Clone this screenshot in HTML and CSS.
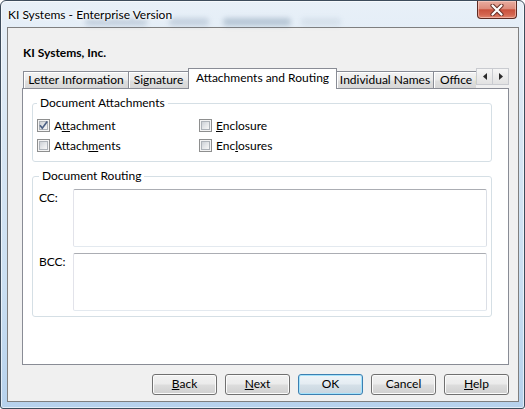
FILE: index.html
```html
<!DOCTYPE html>
<html>
<head>
<meta charset="utf-8">
<link rel="stylesheet" href="styles.css">
</head>
<body>
<div class="window">
  <div class="titlebar">
    <div class="ghost" aria-hidden="true">
      <span class="blob b1"></span><span class="blob b2"></span><span class="blob b3"></span><span class="blob b4"></span>
    </div>
    <span class="title">KI Systems - Enterprise Version</span>
    <div class="close">
      <svg width="16" height="12" viewBox="0 0 16 12"><path d="M3.5 1.5 L12.5 10.5 M12.5 1.5 L3.5 10.5" stroke="#6a3128" stroke-width="4.2" stroke-linecap="round" fill="none"/><path d="M3.5 1.5 L12.5 10.5 M12.5 1.5 L3.5 10.5" stroke="#ffffff" stroke-width="2.2" stroke-linecap="round" fill="none"/></svg>
    </div>
  </div>
  <div class="client">
    <div class="company">KI Systems, Inc.</div>
    <div class="tabrow">
      <div class="tablist">
        <div class="tab w1">Letter Information</div>
        <div class="tab w2">Signature</div>
        <div class="tab sel w3">Attachments and Routing</div>
        <div class="tab w4">Individual Names</div>
        <div class="tab w5">Office Information</div>
      </div>
      <div class="spin">
        <span class="spin-btn"><svg width="4" height="7" viewBox="0 0 4 7"><path d="M4 0 L0 3.5 L4 7 Z" fill="#2b2b2b"/></svg></span>
        <span class="spin-btn"><svg width="4" height="7" viewBox="0 0 4 7"><path d="M0 0 L4 3.5 L0 7 Z" fill="#2b2b2b"/></svg></span>
      </div>
    </div>
    <div class="panel">
      <fieldset class="group">
        <legend>Document Attachments</legend>
        <div class="checks">
          <div class="check"><span class="cb"><span class="cb-in"></span><svg class="tick" width="11" height="11" viewBox="0 0 11 11"><path d="M2 5.2 L4.3 8.2 L9.2 1.6" stroke="#4d6185" stroke-width="1.7" fill="none" stroke-linejoin="miter"/></svg></span><span>A<u>t</u>tachment</span></div>
          <div class="check"><span class="cb"><span class="cb-in"></span></span><span><u>E</u>nclosure</span></div>
          <div class="check"><span class="cb"><span class="cb-in"></span></span><span>Attach<u>m</u>ents</span></div>
          <div class="check"><span class="cb"><span class="cb-in"></span></span><span>Enc<u>l</u>osures</span></div>
        </div>
      </fieldset>
      <fieldset class="group routing">
        <legend>Document Routing</legend>
        <div class="route">
          <span class="rlabel">CC:</span><div class="textbox"></div>
          <span class="rlabel">BCC:</span><div class="textbox"></div>
        </div>
      </fieldset>
    </div>
    <div class="buttons">
      <div class="btn"><u>B</u>ack</div>
      <div class="btn"><u>N</u>ext</div>
      <div class="btn default">OK</div>
      <div class="btn">Cancel</div>
      <div class="btn"><u>H</u>elp</div>
    </div>
  </div>
</div>
</body>
</html>
```

FILE: styles.css
```css
html, body {
  margin: 0;
  padding: 0;
  background: #ffffff;
}

body {
  font-family: "Lato", "Noto Sans", "Liberation Sans", sans-serif;
  font-size: 12px;
  color: #000;
}

.window {
  width: 525px;
  height: 409px;
  box-sizing: border-box;
  border: 1px solid #3d4c5c;
  border-radius: 6px 6px 3px 3px;
  background: linear-gradient(180deg, #e8f0f8 0%, #d9e7f4 30%, #cadff2 70%, #b6d1ec 100%);
  box-shadow: inset 0 0 0 1px rgba(255, 255, 255, 0.6);
  display: flex;
  flex-direction: column;
  overflow: hidden;
}

.titlebar {
  height: 26px;
  flex: none;
  display: flex;
  align-items: flex-start;
  position: relative;
}

.ghost {
  position: absolute;
  left: 0;
  top: 0;
  width: 100%;
  height: 26px;
}

.blob {
  position: absolute;
  top: 17px;
  height: 8px;
  border-radius: 4px;
  background: rgba(80, 110, 140, 0.22);
  filter: blur(2.4px);
}

.b1 { left: 84px; width: 62px; }
.b2 { left: 168px; width: 40px; }
.b3 { left: 222px; width: 68px; background: rgba(80, 110, 140, 0.3); }
.b4 { left: 300px; width: 40px; background: rgba(80, 110, 140, 0.1); }

.title {
  position: relative;
  flex: 1;
  padding: 6px 0 0 7px;
  line-height: 15px;
  font-size: 12px;
  color: #000;
  text-shadow: 0 0 5px #fff, 0 0 3px #fff;
}

.close {
  position: relative;
  width: 40px;
  height: 18px;
  box-sizing: border-box;
  margin-right: 7px;
  border: 1px solid #5c2a22;
  border-top: none;
  border-radius: 0 0 4px 4px;
  background: linear-gradient(180deg, #e9ada0 0%, #dd8c7c 45%, #c9513c 52%, #d4654f 80%, #e0866f 100%);
  box-shadow: inset 0 0 0 1px rgba(255, 220, 210, 0.5);
  display: flex;
  align-items: center;
  justify-content: center;
}

.client {
  flex: 1;
  margin: 0 5px 6px 6px;
  border: 1px solid #7f7f7f;
  background: #f0f0f0;
  padding: 0 9px 0 14px;
  display: flex;
  flex-direction: column;
}

.company {
  height: 40px;
  box-sizing: border-box;
  padding: 17px 0 0 1px;
  font-weight: bold;
  line-height: 15px;
  flex: none;
}

.tabrow {
  display: flex;
  height: 21px;
  flex: none;
}

.tablist {
  display: flex;
  align-items: flex-end;
  width: 454px;
  height: 21px;
  overflow: hidden;
  flex: none;
  padding-left: 1px;
  box-sizing: border-box;
}

.tab {
  flex: none;
  height: 18px;
  box-sizing: border-box;
  border: 1px solid #898c95;
  border-bottom: none;
  background: linear-gradient(180deg, #f3f3f3 0%, #ebebeb 45%, #dedede 55%, #d6d6d6 100%);
  box-shadow: inset 1px 1px 0 #ffffff;
  text-align: center;
  line-height: 16px;
  white-space: nowrap;
  overflow: hidden;
  margin-left: -1px;
}

.tab.w1 { width: 106px; margin-left: 0; }
.tab.w2 { width: 61px; }
.tab.w3 { width: 149px; }
.tab.w4 { width: 98px; }
.tab.w5 { width: 44px; text-align: left; padding-left: 6px; text-overflow: clip; }

.tab.sel {
  height: 21px;
  background: #ffffff;
  box-shadow: none;
  line-height: 18px;
  position: relative;
  z-index: 1;
}

.spin {
  flex: none;
  display: flex;
  width: 33px;
  height: 17px;
  margin-right: -1px;
}

.spin-btn {
  width: 17px;
  height: 17px;
  box-sizing: border-box;
  border: 1px solid #c9cbd0;
  background: linear-gradient(180deg, #f6f6f6 0%, #ececec 50%, #e2e2e2 100%);
  display: flex;
  align-items: center;
  justify-content: center;
}

.spin-btn + .spin-btn {
  margin-left: -1px;
}

.panel {
  height: 277px;
  box-sizing: border-box;
  margin-top: -1px;
  border: 1px solid #898c95;
  background: #ffffff;
  padding: 7px 16px 0 9px;
  flex: none;
}

.group {
  margin: 0;
  border: 1px solid #d5dfe5;
  border-radius: 3px;
  padding: 5px 0 6px 4px;
  min-width: 0;
}

.group legend {
  padding: 0 3px;
  line-height: 14px;
  font-size: 12px;
}

.checks {
  display: grid;
  grid-template-columns: 162px auto;
  grid-auto-rows: 20px;
}

.check {
  display: flex;
  align-items: center;
  gap: 4px;
  line-height: 15px;
}

.cb {
  width: 13px;
  height: 13px;
  box-sizing: border-box;
  border: 1px solid #8e8f8f;
  background: #f4f4f4;
  padding: 1px;
  position: relative;
  flex: none;
}

.cb-in {
  display: block;
  width: 9px;
  height: 9px;
  box-sizing: border-box;
  border: 1px solid #aeb3b9;
  background: linear-gradient(135deg, #cdd1d6 0%, #e6e8ea 55%, #f8f8f8 100%);
}

.tick {
  position: absolute;
  left: 0;
  top: 0;
}

.routing {
  margin-top: 7px;
  padding: 6px 4px 5px 6px;
}

.route {
  display: grid;
  grid-template-columns: 34px 1fr;
  grid-template-rows: 58px 58px;
  row-gap: 6px;
}

.rlabel {
  line-height: 15px;
  padding-top: 1px;
}

.textbox {
  box-sizing: border-box;
  border: 1px solid;
  border-color: #abadb3 #dbdfe6 #e3e9ef #e2e3ea;
  border-radius: 2px;
  background: #ffffff;
}

.buttons {
  margin-top: 9px;
  display: flex;
  justify-content: flex-end;
  gap: 8px;
  flex: none;
}

.btn {
  width: 65px;
  height: 21px;
  box-sizing: border-box;
  border: 1px solid #707070;
  border-radius: 3px;
  background: linear-gradient(180deg, #f2f2f2 0%, #ebebeb 48%, #dddddd 52%, #cfcfcf 100%);
  box-shadow: inset 0 0 0 1px #fbfbfb;
  text-align: center;
  line-height: 18px;
}

.btn.default {
  border-color: #3c7fb1;
  background: linear-gradient(180deg, #eef4f8 0%, #e4ecf2 48%, #d5e0e8 52%, #c8d5df 100%);
  box-shadow: inset 0 0 0 1px #a5e3fb;
}
```
